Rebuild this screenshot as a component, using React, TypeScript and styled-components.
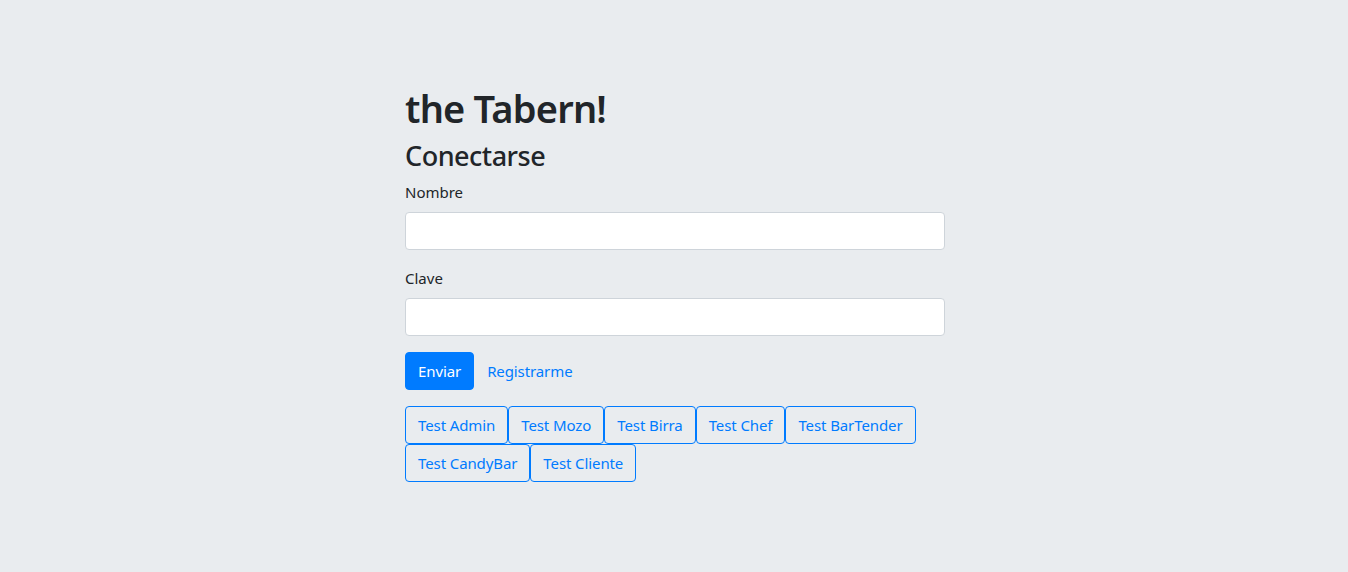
import React from "react";
import styled, { createGlobalStyle } from "styled-components";

const Global = createGlobalStyle`
  html, body { margin: 0; padding: 0; }
  body {
    background: #e9ecef;
    font-family: "Noto Sans", "Open Sans", sans-serif;
    color: #212529;
    font-size: 15px;
    line-height: 24px;
  }
  * { box-sizing: border-box; }
`;

const Page = styled.div`
  min-height: 572px;
  display: flex;
  justify-content: center;
  padding-top: 84px;
  padding-left: 2px;
`;

const Column = styled.div`
  width: 540px;
  display: flex;
  flex-direction: column;
`;

const Title = styled.h1`
  margin: 0 0 8px;
  font-size: 38px;
  font-weight: 600;
  letter-spacing: -0.8px;
  line-height: 48px;
`;

const Subtitle = styled.h2`
  margin: 0 0 8px;
  font-size: 27px;
  font-weight: 500;
  letter-spacing: -0.5px;
  line-height: 32px;
`;

const Group = styled.div`
  margin-bottom: 16px;
  display: flex;
  flex-direction: column;
`;

const Label = styled.label`
  margin-bottom: 8px;
  line-height: 24px;
`;

const Input = styled.input`
  height: 38px;
  padding: 6px 12px;
  border: 1px solid #ced4da;
  border-radius: 4px;
  background: #fff;
  font: inherit;
  color: #495057;
  outline: none;
`;

const Actions = styled.div`
  display: flex;
  align-items: center;
`;

const Button = styled.button<{ $variant: "primary" | "link" | "outline" }>`
  height: 38px;
  padding: 6px 12px;
  font: inherit;
  letter-spacing: -0.1px;
  line-height: 24px;
  border-radius: 4px;
  cursor: pointer;
  border: 1px solid
    ${(p) => (p.$variant === "link" ? "transparent" : "#007bff")};
  background: ${(p) => (p.$variant === "primary" ? "#007bff" : "transparent")};
  color: ${(p) => (p.$variant === "primary" ? "#fff" : "#007bff")};
`;

const TestList = styled.div`
  margin-top: 16px;
  display: flex;
  flex-wrap: wrap;
`;

const tests = [
  "Test Admin",
  "Test Mozo",
  "Test Birra",
  "Test Chef",
  "Test BarTender",
  "Test CandyBar",
  "Test Cliente",
];

export default function App() {
  return (
    <>
      <Global />
      <Page>
        <Column>
          <Title>the Tabern!</Title>
          <Subtitle>Conectarse</Subtitle>
          <Group>
            <Label>Nombre</Label>
            <Input type="text" />
          </Group>
          <Group>
            <Label>Clave</Label>
            <Input type="password" />
          </Group>
          <Actions>
            <Button $variant="primary">Enviar</Button>
            <Button $variant="link">Registrarme</Button>
          </Actions>
          <TestList>
            {tests.map((t) => (
              <Button key={t} $variant="outline">
                {t}
              </Button>
            ))}
          </TestList>
        </Column>
      </Page>
    </>
  );
}
